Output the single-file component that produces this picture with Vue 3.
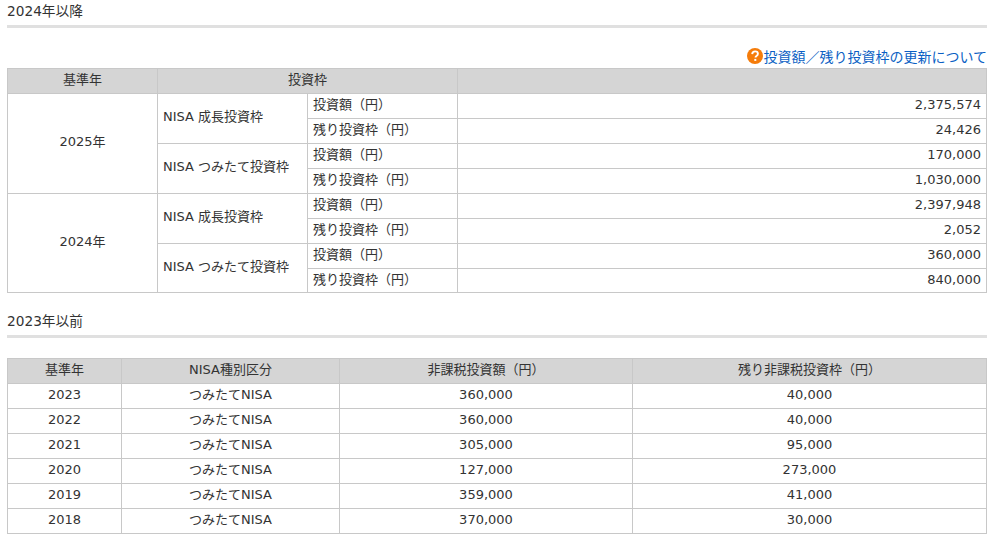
<script setup>
const groups = [
  { year: '2025年', rows: [
    { name: 'NISA 成長投資枠', a: '2,375,574', b: '24,426' },
    { name: 'NISA つみたて投資枠', a: '170,000', b: '1,030,000' },
  ]},
  { year: '2024年', rows: [
    { name: 'NISA 成長投資枠', a: '2,397,948', b: '2,052' },
    { name: 'NISA つみたて投資枠', a: '360,000', b: '840,000' },
  ]},
]
const old = [
  ['2023', '360,000', '40,000'],
  ['2022', '360,000', '40,000'],
  ['2021', '305,000', '95,000'],
  ['2020', '127,000', '273,000'],
  ['2019', '359,000', '41,000'],
  ['2018', '370,000', '30,000'],
]
</script>

<template>
  <div class="page">
    <h2 class="head">2024年以降</h2>
    <div class="note">
      <a class="link">
        <svg class="q" width="16" height="16" viewBox="0 0 16 16">
          <circle cx="8" cy="8" r="8" fill="#f57c0a" />
          <path d="M5.2 6.1C5.3 4.4 6.5 3.4 8.1 3.4c1.6 0 2.8 1 2.8 2.4 0 1.1-.6 1.7-1.4 2.2-.7.5-1 .8-1 1.6" fill="none" stroke="#fff" stroke-width="1.9" />
          <rect x="7.3" y="10.9" width="2" height="2" fill="#fff" />
        </svg>投資額／残り投資枠の更新について</a>
    </div>
    <table class="t1">
      <colgroup>
        <col class="c150" /><col class="c150" /><col class="c150" /><col />
      </colgroup>
      <thead>
        <tr><th>基準年</th><th colspan="2">投資枠</th><th></th></tr>
      </thead>
      <tbody>
        <template v-for="g in groups" :key="g.year">
          <template v-for="(r, i) in g.rows" :key="i">
            <tr>
              <td v-if="i === 0" rowspan="4" class="center span">{{ g.year }}</td>
              <td rowspan="2" class="span">{{ r.name }}</td>
              <td>投資額（円）</td>
              <td class="right">{{ r.a }}</td>
            </tr>
            <tr>
              <td>残り投資枠（円）</td>
              <td class="right">{{ r.b }}</td>
            </tr>
          </template>
        </template>
      </tbody>
    </table>
    <h2 class="head second">2023年以前</h2>
    <table class="t2">
      <colgroup>
        <col class="o1" /><col class="o2" /><col class="o3" /><col />
      </colgroup>
      <thead>
        <tr><th>基準年</th><th>NISA種別区分</th><th>非課税投資額（円）</th><th>残り非課税投資枠（円）</th></tr>
      </thead>
      <tbody>
        <tr v-for="r in old" :key="r[0]">
          <td class="center">{{ r[0] }}</td>
          <td class="center">つみたてNISA</td>
          <td class="center">{{ r[1] }}</td>
          <td class="center">{{ r[2] }}</td>
        </tr>
      </tbody>
    </table>
  </div>
</template>

<style scoped>
.page {
  box-sizing: border-box;
  width: 997px;
  height: 546px;
  padding: 0 10px 0 7px;
  overflow: hidden;
  background: #fff;
  color: #333;
  font-family: "DejaVu Sans", "Noto Sans CJK JP", sans-serif;
  font-size: 13px;
}
.head {
  margin: 0;
  height: 25px;
  line-height: 23px;
  font-size: 13.7px;
  font-weight: normal;
  border-bottom: 3px solid #e0e0e0;
}
.second { margin-top: 17px; }
.note {
  height: 40px;
  display: flex;
  justify-content: flex-end;
  align-items: flex-end;
  padding-bottom: 2px;
  box-sizing: border-box;
}
.link {
  display: inline-flex;
  align-items: center;
  color: #0b5fc4;
  font-size: 14px;
  line-height: 18px;
}
.q { flex: none; margin-top: -2px; }
table {
  width: 980px;
  border-collapse: collapse;
  table-layout: fixed;
}
.t2 { margin-top: 20px; }
th, td {
  box-sizing: border-box;
  height: 25px;
  padding: 0 5px 2px;
  border: 1px solid #c8c8c8;
  font-weight: normal;
  line-height: 18px;
}
td.span { padding-bottom: 4px; }
.t1 tbody tr:nth-child(5) td.center,
.t1 tbody tr:nth-child(7) td.span { padding-bottom: 2px; }
.t1 tbody tr:last-child td { height: 24px; }
th {
  background: #d5d5d5;
  text-align: center;
}
.center { text-align: center; }
.right { text-align: right; }
.c150 { width: 150px; }
.o1 { width: 114px; }
.o2 { width: 218px; }
.o3 { width: 293px; }
</style>
